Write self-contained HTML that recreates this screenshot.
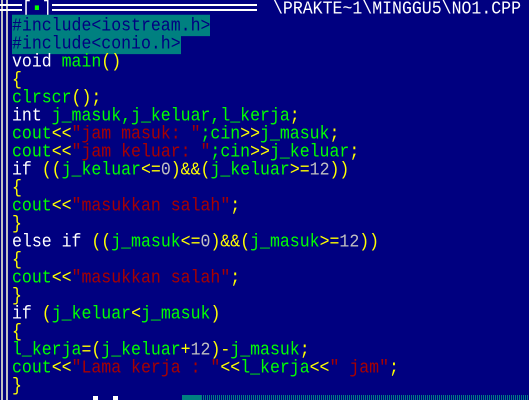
<!DOCTYPE html>
<html><head><style>
html,body{margin:0;padding:0;}
body{width:529px;height:400px;background:#000080;position:relative;overflow:hidden;font-family:"Liberation Mono",monospace;}
.vl{position:absolute;top:0;height:400px;width:2px;background:#c0c0c0;}
.hl{position:absolute;height:2px;background:#fff;}
pre{position:absolute;left:12px;top:17px;margin:0;font-family:"Liberation Mono",monospace;font-size:16.55px;line-height:16px;color:#00ff00;transform:scaleY(1.125);transform-origin:0 0;}
.w{color:#fff}.y{color:#ffff00}.r{color:#a80000}.n{color:#c0c0c0}
.hi{background:#008080;color:#000080}
.t{position:absolute;font-family:"Liberation Mono",monospace;font-size:16.55px;line-height:16px;color:#fff;top:0;transform:scaleY(1.125);transform-origin:0 0;}
</style></head><body>
<div class="vl" style="left:1px"></div>
<div class="vl" style="left:6px"></div>
<div class="hl" style="left:0;width:22px;top:4px"></div>
<div class="hl" style="left:0;width:22px;top:9px"></div>
<div class="hl" style="left:52px;width:205px;top:4px"></div>
<div class="hl" style="left:52px;width:205px;top:9px"></div>
<div class="t" style="left:22px">[<span style="color:#00ff00">&#9642;</span>]</div>
<div class="t" style="left:273px">\PRAKTE~1\MINGGU5\NO1.CPP</div>
<pre><span class="hi">#include&lt;iostream.h&gt;</span>
<span class="hi">#include&lt;conio.h&gt;</span>
<span class="w">void</span> main<span class="y">()</span>
<span class="y">{</span>
clrscr<span class="y">();</span>
<span class="w">int</span> j_masuk,j_keluar,l_kerja<span class="y">;</span>
cout<span class="y">&lt;&lt;</span><span class="r">"jam masuk: "</span>;cin<span class="y">&gt;&gt;</span>j_masuk<span class="y">;</span>
cout<span class="y">&lt;&lt;</span><span class="r">"jam keluar: "</span>;cin<span class="y">&gt;&gt;</span>j_keluar<span class="y">;</span>
<span class="w">if</span> <span class="y">((</span>j_keluar<span class="y">&lt;=</span><span class="n">0</span><span class="y">)&amp;&amp;(</span>j_keluar<span class="y">&gt;=</span><span class="n">12</span><span class="y">))</span>
<span class="y">{</span>
cout<span class="y">&lt;&lt;</span><span class="r">"masukkan salah"</span><span class="y">;</span>
<span class="y">}</span>
<span class="w">else if</span> <span class="y">((</span>j_masuk<span class="y">&lt;=</span><span class="n">0</span><span class="y">)&amp;&amp;(</span>j_masuk<span class="y">&gt;=</span><span class="n">12</span><span class="y">))</span>
<span class="y">{</span>
cout<span class="y">&lt;&lt;</span><span class="r">"masukkan salah"</span><span class="y">;</span>
<span class="y">}</span>
<span class="w">if</span> <span class="y">(</span>j_keluar<span class="y">&lt;</span>j_masuk<span class="y">)</span>
<span class="y">{</span>
l_kerja<span class="y">=(</span>j_keluar<span class="y">+</span><span class="n">12</span><span class="y">)-</span>j_masuk<span class="y">;</span>
cout<span class="y">&lt;&lt;</span><span class="r">"Lama kerja : "</span><span class="y">&lt;&lt;</span>l_kerja<span class="y">&lt;&lt;</span><span class="r">" jam"</span><span class="y">;</span>
<span class="y">}</span></pre>
<div style="position:absolute;left:93px;top:396px;width:5px;height:4px;background:#fff"></div>
<div style="position:absolute;left:113px;top:396px;width:5px;height:4px;background:#fff"></div>
<div style="position:absolute;left:182px;top:395px;width:20px;height:5px;background:#008080"></div>
<div style="position:absolute;left:203px;top:395px;width:326px;height:5px;background:repeating-linear-gradient(90deg,#008080 0 1px,#000080 1px 2px)"></div>
</body></html>
